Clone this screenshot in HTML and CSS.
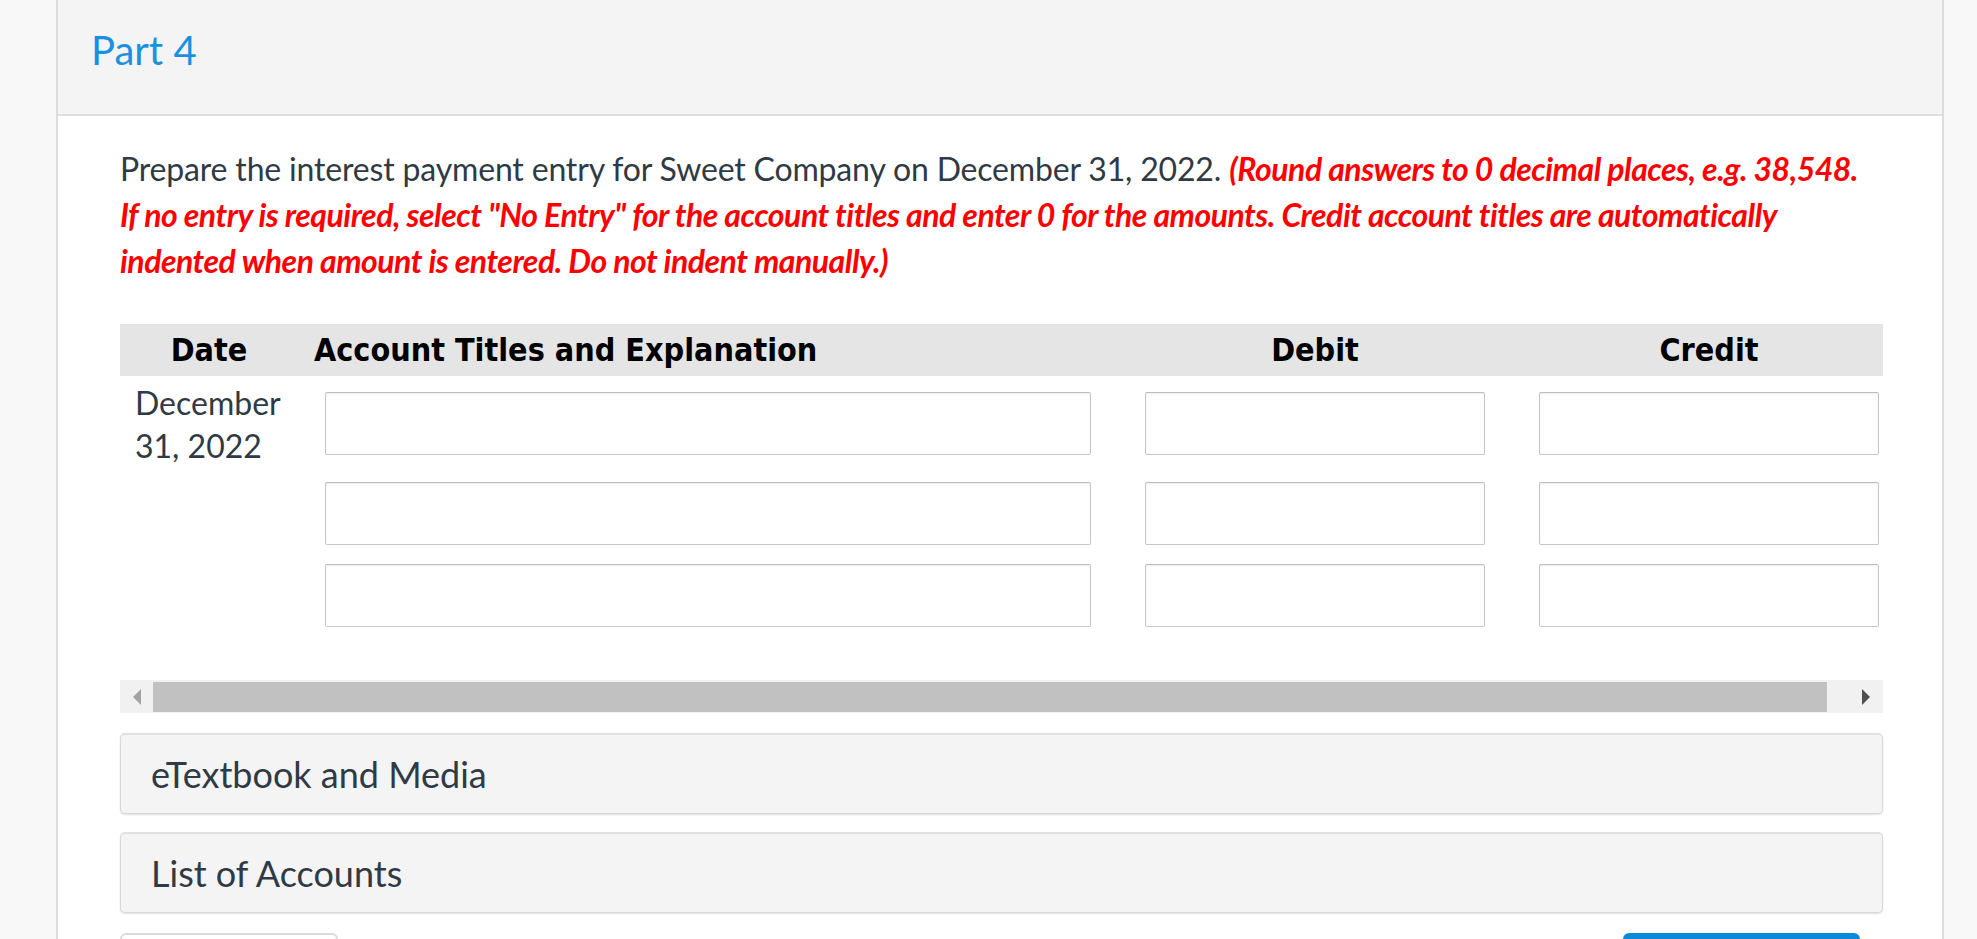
FILE: index.html
```html
<!DOCTYPE html>
<html lang="en">
<head>
<meta charset="utf-8">
<title>Part 4</title>
<link rel="stylesheet" href="styles.css">
</head>
<body>
<div class="panel">
  <div class="panel-head">
    <h2 class="part-title">Part 4</h2>
  </div>
  <div class="panel-body">
    <p class="question"><span class="lead">Prepare the interest payment entry for Sweet Company on December 31, 2022.</span> <em class="note">(Round answers to 0 decimal places, e.g. 38,548. If no entry is required, select "No Entry" for the account titles and enter 0 for the amounts. Credit account titles are automatically indented when amount is entered. Do not indent manually.)</em></p>

    <div class="table-wrap">
      <div class="journal">
        <div class="th th-date">Date</div>
        <div class="th th-account">Account Titles and Explanation</div>
        <div class="th th-num">Debit</div>
        <div class="th th-num">Credit</div>

        <div class="td td-date first">December<br>31, 2022</div>
        <div class="td td-account first"><input class="field field-account" type="text"></div>
        <div class="td td-num first"><input class="field field-num" type="text"></div>
        <div class="td td-num first"><input class="field field-num" type="text"></div>

        <div class="td td-date"></div>
        <div class="td td-account"><input class="field field-account" type="text"></div>
        <div class="td td-num"><input class="field field-num" type="text"></div>
        <div class="td td-num"><input class="field field-num" type="text"></div>

        <div class="td td-date"></div>
        <div class="td td-account"><input class="field field-account" type="text"></div>
        <div class="td td-num"><input class="field field-num" type="text"></div>
        <div class="td td-num"><input class="field field-num" type="text"></div>
      </div>
    </div>

    <div class="hscroll">
      <div class="hs-btn hs-left"><span class="arrow-left"></span></div>
      <div class="hs-thumb"></div>
      <div class="hs-rest"><span class="arrow-right"></span></div>
    </div>

    <div class="accordion">eTextbook and Media</div>
    <div class="accordion">List of Accounts</div>

    <div class="actions">
      <button class="btn btn-plain" type="button"></button>
      <button class="btn btn-primary" type="button"></button>
    </div>
  </div>
</div>
</body>
</html>
```

FILE: styles.css
```css
html, body {
  margin: 0;
  padding: 0;
  height: 939px;
  overflow: hidden;
}

body {
  background: #f8f8f8;
  font-family: Lato, "Noto Sans", sans-serif;
  color: #2f3a44;
}

.panel {
  margin: 0 33px 0 56px;
  border-left: 2px solid #dcdcdc;
  border-right: 2px solid #dcdcdc;
  background: #ffffff;
  min-height: 939px;
}

.panel-head {
  background: #f4f4f4;
  border-bottom: 2px solid #dedede;
  padding: 26px 0 40px 33px;
}

.part-title {
  margin: 0;
  font-weight: 400;
  font-size: 40px;
  line-height: 48px;
  color: #1a91e0;
}

.panel-body {
  padding: 30px 59px 0 62px;
}

.question {
  margin: 0 14px 0 0;
  font-size: 32px;
  line-height: 46px;
  color: #2f3a44;
}

.lead {
  letter-spacing: -0.17px;
}

.note {
  color: #ff0000;
  font-weight: 700;
  font-style: italic;
  letter-spacing: -0.5px;
}

.table-wrap {
  margin-top: 40px;
  overflow: hidden;
  width: 100%;
}

.journal {
  display: grid;
  grid-template-columns: 178px 820px 394px 394px;
  width: 1786px;
}

.th {
  background: #e5e5e5;
  height: 52px;
  line-height: 52px;
  font-family: "DejaVu Sans", Verdana, sans-serif;
  font-stretch: condensed;
  font-weight: 700;
  font-size: 32px;
  color: #000;
  margin-bottom: 8px;
}

.th-date,
.th-num {
  text-align: center;
}

.th-account {
  padding-left: 16px;
}

.td {
  height: 82px;
  box-sizing: border-box;
}

.td.first {
  height: 90px;
}

.td-date {
  font-size: 32px;
  line-height: 43px;
  padding-left: 15px;
  margin-top: -3px;
  color: #2f3a44;
}

.td-account {
  padding: 8px 0 0 27px;
}

.td-num {
  padding: 8px 27px 0 27px;
}

.field {
  display: block;
  box-sizing: border-box;
  height: 63px;
  border: 1px solid #c6c6c6;
  border-top-color: #bdbdbd;
  border-radius: 2px;
  box-shadow: inset 0 1px 2px rgba(0, 0, 0, 0.08);
  background: #fff;
  margin: 0;
  padding: 0 10px;
  font-family: Lato, sans-serif;
  font-size: 28px;
}

.field-account {
  width: 766px;
}

.field-num {
  width: 340px;
}

.hscroll {
  margin-top: 42px;
  height: 33px;
  background: #f1f1f1;
  display: flex;
  align-items: center;
}

.hs-btn {
  width: 33px;
  height: 33px;
  display: flex;
  align-items: center;
  justify-content: center;
  flex: none;
}

.arrow-left {
  width: 0;
  height: 0;
  border-top: 8px solid transparent;
  border-bottom: 8px solid transparent;
  border-right: 8px solid #a3a3a3;
}

.hs-thumb {
  width: 1674px;
  height: 30px;
  background: #c1c1c1;
  flex: none;
}

.hs-rest {
  flex: 1;
  height: 33px;
  display: flex;
  align-items: center;
  justify-content: flex-end;
  padding-right: 13px;
}

.arrow-right {
  width: 0;
  height: 0;
  border-top: 8px solid transparent;
  border-bottom: 8px solid transparent;
  border-left: 8px solid #4f4f4f;
}

.accordion {
  margin-top: 20px;
  background: #f4f4f4;
  border: 1px solid #d8d8d8;
  border-top: 2px solid #e0e0e0;
  border-radius: 5px;
  box-shadow: 0 1px 2px rgba(0, 0, 0, 0.12);
  padding: 16px 30px 16px 30px;
  font-size: 36px;
  line-height: 46px;
  color: #2f3a44;
}

.accordion + .accordion {
  margin-top: 18px;
}

.actions {
  margin-top: 20px;
  display: flex;
  justify-content: space-between;
  padding-right: 23px;
}

.btn {
  height: 60px;
  border-radius: 6px;
  margin: 0;
  font-family: Lato, sans-serif;
}

.btn-plain {
  width: 218px;
  background: #fff;
  border: 2px solid #dcdcdc;
}

.btn-primary {
  width: 237px;
  background: #0b8ad9;
  border: none;
}
```
